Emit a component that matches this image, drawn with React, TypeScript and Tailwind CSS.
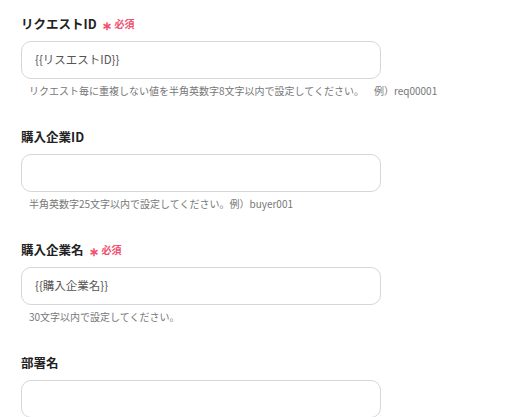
import React from "react";

type Field = { label: string; required?: boolean; value?: string; help?: React.ReactNode };

const fields: Field[] = [
  {
    label: "リクエストID",
    required: true,
    value: "{{リスエストID}}",
    help: (
      <>
        リクエスト毎に重複しない値を半角英数字8文字以内で設定してください。<span className="ml-[10px]">例）req00001</span>
      </>
    ),
  },
  { label: "購入企業ID", help: "半角英数字25文字以内で設定してください。例）buyer001" },
  { label: "購入企業名", required: true, value: "{{購入企業名}}", help: "30文字以内で設定してください。" },
  { label: "部署名" },
];

function FormField({ f }: { f: Field }) {
  return (
    <div className="pb-[29px]">
      <div className="flex items-center h-5 text-[12.5px] font-bold text-[#222] leading-5">
        <span>{f.label}</span>
        {f.required && (
          <span className="ml-[5px] flex items-center text-[10px] font-bold text-[#f0506e]">
            <span className="text-[12px] mr-[3px] mt-[1px]">∗</span>必須
          </span>
        )}
      </div>
      <div className="mt-[7px] h-[38px] w-[360px] rounded-[10px] border border-[#d3d6dc] bg-white flex items-center pl-[13px] text-[11.5px] text-[#555]">
        {f.value}
      </div>
      {f.help && <div className="mt-[5px] pl-[8px] h-[14px] leading-[14px] text-[10px] text-[#777] whitespace-nowrap">{f.help}</div>}
    </div>
  );
}

export default function App() {
  return (
    <div
      className="w-[517px] h-[417px] overflow-hidden bg-white pl-[21px] pt-[14px]"
      style={{ fontFamily: '"Noto Sans CJK JP", "Noto Sans", sans-serif' }}
    >
      {fields.map((f) => (
        <FormField key={f.label} f={f} />
      ))}
    </div>
  );
}
